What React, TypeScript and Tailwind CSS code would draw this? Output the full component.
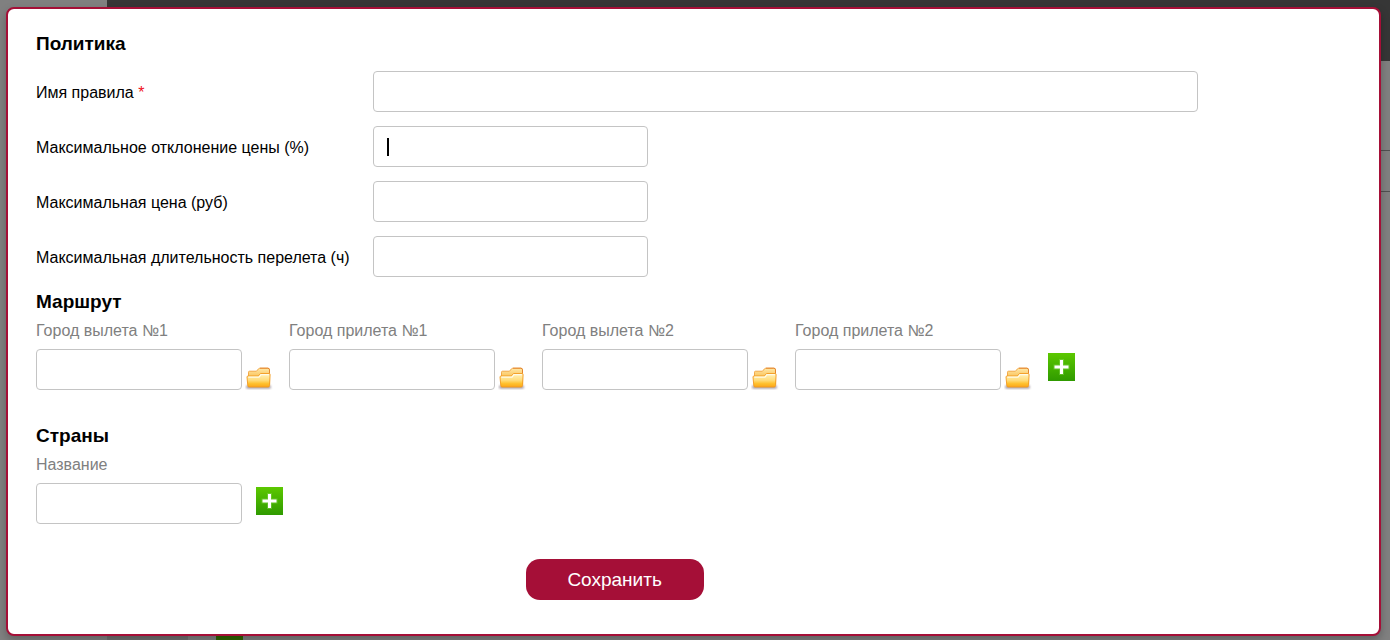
import { useId } from "react";

function FolderIcon() {
  return (
    <svg viewBox="0 0 28 26" className="h-[26px] w-7" aria-hidden="true">
      <defs>
        <linearGradient id="folderBack" x1="0" y1="0" x2="0" y2="1">
          <stop offset="0" stopColor="#ffe9a8" />
          <stop offset="1" stopColor="#f5a31c" />
        </linearGradient>
        <linearGradient id="folderFront" x1="0" y1="0" x2="0" y2="1">
          <stop offset="0" stopColor="#fff3c0" />
          <stop offset="0.5" stopColor="#ffdc7a" />
          <stop offset="0.75" stopColor="#ffc02c" />
          <stop offset="1" stopColor="#fba61a" />
        </linearGradient>
        <filter id="folderShade" x="-20%" y="-100%" width="140%" height="300%">
          <feGaussianBlur stdDeviation="0.9" />
        </filter>
      </defs>
      <rect x="1" y="21.5" width="25" height="3" rx="1.5" fill="#5a4a58" opacity="0.6" filter="url(#folderShade)" />
      <path d="M3.5 20V8.2Q3.5 7.2 4.5 7.2H11.5L13.5 4.8Q14 4.2 15 4.2H22.8Q24.5 4.2 24.5 5.8V20Z" fill="url(#folderBack)" stroke="#f0a03a" strokeWidth="0.9" />
      <path d="M15 4.2H22.8Q24.5 4.2 24.5 5.8V9" fill="none" stroke="#e2812a" strokeWidth="0.9" />
      <path d="M2 13Q2 12 3 12H13.5L15.5 9.5H24Q25.2 9.5 25.1 10.7L24.6 21.5Q24.5 23 23 23H4.2Q2.9 23 2.8 21.7Z" fill="url(#folderFront)" stroke="#f39a1e" strokeWidth="0.9" />
      <path d="M3.3 13.2H14L16 10.7H23.9" fill="none" stroke="#fffbe8" strokeWidth="1.2" />
    </svg>
  );
}

function AddButton({ label }: { label: string }) {
  return (
    <button
      type="button"
      aria-label={label}
      className="flex size-7 shrink-0 items-center justify-center"
    >
      <svg viewBox="0 0 28 28" className="size-7" aria-hidden="true">
        <defs>
          <linearGradient id="addFill" x1="0" y1="0" x2="0" y2="1">
            <stop offset="0" stopColor="#5cc800" />
            <stop offset="1" stopColor="#2f9a00" />
          </linearGradient>
        </defs>
        <rect width="27" height="28" fill="url(#addFill)" />
        <path d="M13.5 6V22M5.5 14H21.5" stroke="#8fe060" strokeWidth="5" opacity="0.4" />
        <path d="M13.5 7V21M6.5 14H20.5" stroke="#ffffff" strokeWidth="3" />
      </svg>
    </button>
  );
}

const inputBox = "h-[41px] w-full rounded-sm border border-[#c4c4c4] bg-white px-3 text-base outline-none";

function RuleRow({
  label,
  required,
  wide,
  active,
}: {
  label: string;
  required?: boolean;
  wide?: boolean;
  active?: boolean;
}) {
  const id = useId();
  return (
    <div className="flex items-center">
      <label htmlFor={id} className="w-[337px] shrink-0 pt-0.5">
        {label}
        {required && <span className="text-[#f01020]"> *</span>}
      </label>
      <div className={wide ? "relative w-full max-w-[825px]" : "relative w-full max-w-[275px]"}>
        <input id={id} type="text" required={required} className={inputBox} />
        {active && <span className="absolute top-3 left-[14px] h-[18px] w-0.5 bg-black" />}
      </div>
    </div>
  );
}

function CityField({ label }: { label: string }) {
  const id = useId();
  return (
    <div className="w-[239px]">
      <label htmlFor={id} className="block leading-5 text-[#808080]">
        {label}
      </label>
      <div className="mt-2 flex items-end gap-[3px]">
        <input id={id} type="text" className={`${inputBox} max-w-[206px]`} />
        <button type="button" aria-label={`Выбрать: ${label}`} className="shrink-0">
          <FolderIcon />
        </button>
      </div>
    </div>
  );
}

const cities = ["Город вылета №1", "Город прилета №1", "Город вылета №2", "Город прилета №2"];

function Backdrop() {
  return (
    <div className="absolute inset-0 flex bg-[#808080]" aria-hidden="true">
      <div className="w-[107px] shrink-0" />
      <div className="flex grow flex-col">
        <div className="h-[61px] bg-[#363636]" />
        <div className="mt-[89px] h-[42px] border-y border-[#505050]" />
        <div className="mt-auto flex h-6">
          <div className="w-[81px] bg-[#707070]" />
          <div className="ml-7 w-[27px] bg-[#2f6400]" />
        </div>
      </div>
    </div>
  );
}

export default function App() {
  return (
    <div className="relative min-h-screen overflow-hidden pt-[7px] pr-[9px] pb-1 pl-1.5 font-['Liberation_Sans',Arial,sans-serif] text-base text-black">
      <Backdrop />
      <div
        role="dialog"
        aria-labelledby="policy-title"
        className="relative rounded-lg border-2 border-[#a50f37] bg-white px-7 pt-[23px] pb-[34px] shadow-[0_4px_8px_rgba(0,0,0,0.25)]"
      >
        <form>
          <h2 id="policy-title" className="text-[19px] leading-6 font-bold">
            Политика
          </h2>
          <div className="mt-[15px] flex flex-col gap-3.5">
            <RuleRow label="Имя правила" required wide />
            <RuleRow label="Максимальное отклонение цены (%)" active />
            <RuleRow label="Максимальная цена (руб)" />
            <RuleRow label="Максимальная длительность перелета (ч)" />
          </div>

          <h2 className="mt-[13px] text-[19px] leading-6 font-bold">Маршрут</h2>
          <div className="mt-[7px] flex flex-wrap items-end gap-x-3.5 gap-y-3">
            {cities.map((city) => (
              <CityField key={city} label={city} />
            ))}
            <div className="flex h-[41px] items-start pt-1">
              <AddButton label="Добавить маршрут" />
            </div>
          </div>

          <h2 className="mt-[34px] text-[19px] leading-6 font-bold">Страны</h2>
          <label htmlFor="country" className="mt-[7px] block leading-5 text-[#808080]">
            Название
          </label>
          <div className="mt-2 flex items-start gap-3.5">
            <input id="country" type="text" className={`${inputBox} max-w-[206px]`} />
            <div className="pt-1">
              <AddButton label="Добавить страну" />
            </div>
          </div>

          <div className="mt-[35px] flex w-[88%] justify-center">
            <button
              type="submit"
              className="h-[41px] w-[178px] rounded-[14px] bg-[#a50f37] pt-0.5 text-[19px] text-white"
            >
              Сохранить
            </button>
          </div>
        </form>
      </div>
    </div>
  );
}
